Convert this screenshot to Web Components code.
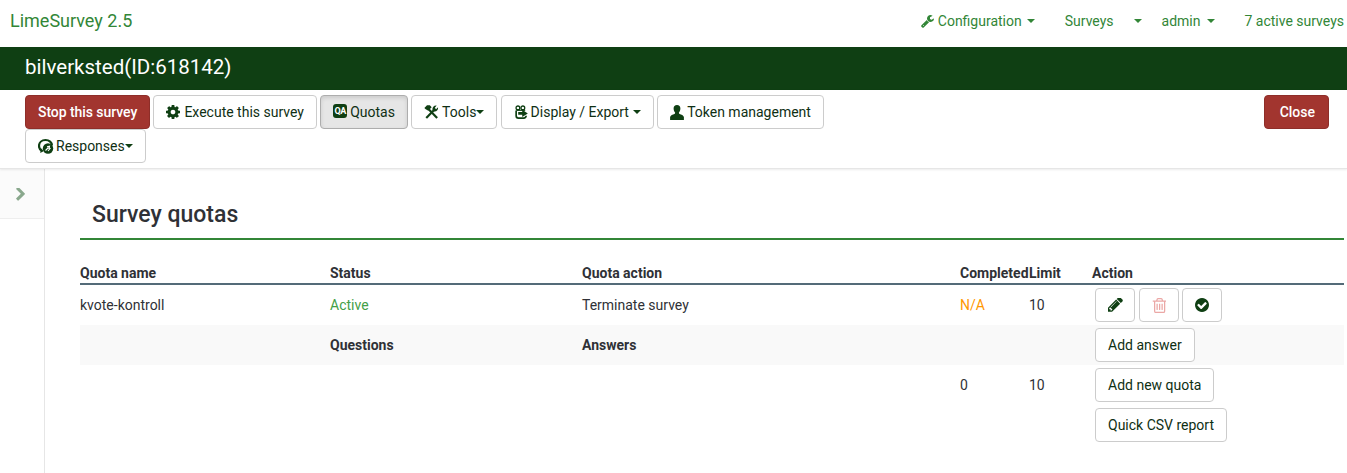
<!DOCTYPE html>
<html>
<head>
<meta charset="utf-8">
<title>Survey quotas</title>
<style>
    html, body {
        margin: 0;
        padding: 0;
        height: 473px;
        overflow: hidden;
        background: #fff;
        font-family: Roboto, "Liberation Sans", sans-serif;
        font-size: 14px;
        color: #2f3136;
    }
    ls-page {
        --green: #328637;
        --dark: #0f3f13;
        --red: #a2352f;
    }
</style>
</head>
<body>
<ls-page>
    <ls-navbar slot="top" brand="LimeSurvey 2.5">
        <nav-link icon="wrench" caret tight gap="30">Configuration</nav-link>
        <nav-link caret wide gap="20">Surveys</nav-link>
        <nav-link caret gap="29">admin</nav-link>
        <nav-link>7 active surveys</nav-link>
    </ls-navbar>
    <title-bar>bilverksted(ID:618142)</title-bar>
    <ls-toolbar>
        <ls-button kind="danger" style="letter-spacing:-.06px">Stop this survey</ls-button>
        <ls-button icon="cog">Execute this survey</ls-button>
        <ls-button icon="qa" active>Quotas</ls-button>
        <ls-button icon="tools" caret="tight">Tools</ls-button>
        <ls-button icon="display" caret="space">Display / Export</ls-button>
        <ls-button icon="user">Token management</ls-button>
        <ls-button icon="responses" caret="tight">Responses</ls-button>
        <ls-button slot="right" kind="danger" style="padding:0 13px 0 15px">Close</ls-button>
    </ls-toolbar>
    <ls-sidebar></ls-sidebar>
    <ls-content heading="Survey quotas">
        <quota-row head>
            <span>Quota name</span><span>Status</span><span>Quota action</span><span>Completed</span><span>Limit</span><span>Action</span>
        </quota-row>
        <quota-row>
            <span>kvote-kontroll</span><span style="color:#43a047">Active</span><span>Terminate survey</span><span style="color:#ff9800">N/A</span><span>10</span>
            <div class="acts">
                <ls-button icon="pencil" square></ls-button>
                <ls-button icon="trash" square faded></ls-button>
                <ls-button icon="check" square></ls-button>
            </div>
        </quota-row>
        <quota-row shaded>
            <span></span><b>Questions</b><b>Answers</b><span></span><span></span>
            <div class="acts"><ls-button>Add answer</ls-button></div>
        </quota-row>
        <quota-row>
            <span></span><span></span><span></span><span>0</span><span>10</span>
            <div class="acts"><ls-button>Add new quota</ls-button></div>
        </quota-row>
        <quota-row>
            <span></span><span></span><span></span><span></span><span></span>
            <div class="acts"><ls-button>Quick CSV report</ls-button></div>
        </quota-row>
    </ls-content>
</ls-page>

<script>
const ICONS = {
    wrench: `<svg viewBox="64 128 1664 1664" width="13" height="13"><path d="M448 1472q0-26-19-45t-45-19-45 19-19 45 19 45 45 19 45-19 19-45zm644-420l-682 682q-37 37-90 37-52 0-91-37l-106-108q-38-36-38-90 0-53 38-91l681-681q39 98 114.5 173.5t173.5 114.5zm634-435q0 39-23 106-47 134-164.5 217.5t-258.5 83.5q-185 0-316.5-131.5t-131.5-316.5 131.5-316.5 316.5-131.5q58 0 121.5 16.5t107.5 46.5q16 11 16 28t-16 28l-293 169v224l193 107q5-3 79-48.5t135.5-81 70.5-35.5q15 0 23.5 10t8.5 25z"/></svg>`,
    cog: `<svg viewBox="128 128 1536 1536" width="14" height="14"><path d="M1152 896q0-106-75-181t-181-75-181 75-75 181 75 181 181 75 181-75 75-181zm512-109v222q0 12-8 23t-20 13l-185 28q-19 54-39 91 35 50 107 138 10 12 10 25t-9 23q-27 37-99 108t-94 71q-12 0-26-9l-138-108q-44 23-91 38-16 136-29 186-7 28-36 28h-222q-14 0-24.5-8.5t-11.5-21.5l-28-184q-49-16-90-37l-141 107q-10 9-25 9-14 0-25-11-126-114-165-168-7-10-7-23 0-12 8-23 15-21 51-66.5t54-70.5q-27-50-41-99l-183-27q-13-2-21-12.5t-8-23.5v-222q0-12 8-23t19-13l186-28q14-46 39-92-40-57-107-138-10-12-10-24 0-10 9-23 26-36 98.5-107.5t94.5-71.5q13 0 26 10l138 107q44-23 91-38 16-136 29-186 7-28 36-28h222q14 0 24.5 8.5t11.5 21.5l28 184q49 16 90 37l142-107q9-9 24-9 13 0 25 10 129 119 165 170 7 8 7 22 0 12-8 23-15 21-51 66.5t-54 70.5q26 50 41 98l183 28q13 2 21 12.5t8 23.5z"/></svg>`,
    qa: `<span class="qa">QA</span>`,
    tools: `<svg viewBox="0 0 16 16" width="15" height="16"><path d="M14 14.500 4.500 4.500" stroke="currentColor" stroke-width="2.300" fill="none"/><path d="M.4 3.600 3.200.8h3L8.200 3 4.500 6.700 2.800 5.600 1.800 5z"/><path d="M2.400 14.500 11 5.500" stroke="currentColor" stroke-width="2.300" fill="none"/><path d="M9 5.500C8.700 2.800 10.800.6 13.500 1L11.600 3.400 12.800 5 15 3C15.400 5.900 13.300 8 10.500 7.500z"/></svg>`,
    display: `<svg viewBox="0 0 15 16" width="14" height="16"><g fill="none" stroke="currentColor"><circle cx="4.200" cy="3.600" r="2" stroke-width="1.400"/><circle cx="9.500" cy="3.600" r="2" stroke-width="1.400"/><path d="M2.300 6.500V12a2.500 2.500 0 0 0 2.500 2.500h5.700A2.500 2.500 0 0 0 13 12" stroke-width="1.800"/><path d="M2.500 6.200H12" stroke-width="1.200"/></g><path d="M4.500 8h4.300V5.600L14.800 9.500 8.800 13.400V11H4.500z"/></svg>`,
    user: `<svg viewBox="1 .6 14 15" width="14" height="15"><path d="M8 .6c2.200 0 3.400 1.500 3.400 3.500 0 1.500-.6 3-1.500 4 0 .7.100 1.200.7 1.500 1.700.8 3.900 1.200 4.300 3v3H1.100v-3c.4-1.800 2.600-2.200 4.300-3 .6-.3.700-.8.700-1.500-.9-1-1.500-2.500-1.500-4C4.600 2.100 5.800.6 8 .6z"/></svg>`,
    responses: `<svg viewBox="0 0 16 16" width="16" height="16"><path d="M3.800 12.800C2 11.700 1 10 1 8 1 4.500 3.800 2 7.500 2S14 4.500 14 7.500" fill="none" stroke="currentColor" stroke-width="2.200"/><path d="M2.200 15 6 13 3 10.500z"/><circle cx="10" cy="10.500" r="5.200"/><path d="M7.500 12.500 10.500 9.500M9 8.800l2.500-.6-.4 2.600M12.500 10 10 13" fill="none" stroke="#fff" stroke-width="1.100"/></svg>`,
    pencil: `<svg viewBox="128 256 1536 1536" width="15" height="15"><path d="M491 1536l91-91-235-235-91 91v107h128v128h107zm523-928q0-22-22-22-10 0-17 7l-542 542q-7 7-7 17 0 22 22 22 10 0 17-7l542-542q7-7 7-17zm-54-192l416 416-832 832h-416v-416zm683 96q0 53-37 90l-166 166-416-416 166-165q36-38 90-38 53 0 91 38l235 234q37 39 37 91z"/></svg>`,
    trash: `<svg viewBox="128 128 1408 1536" width="14" height="15"><path d="M704 736v576q0 14-9 23t-23 9h-64q-14 0-23-9t-9-23v-576q0-14 9-23t23-9h64q14 0 23 9t9 23zm256 0v576q0 14-9 23t-23 9h-64q-14 0-23-9t-9-23v-576q0-14 9-23t23-9h64q14 0 23 9t9 23zm256 0v576q0 14-9 23t-23 9h-64q-14 0-23-9t-9-23v-576q0-14 9-23t23-9h64q14 0 23 9t9 23zm128 724v-948h-896v948q0 22 7 40.500t14.500 27 10.500 8.500h832q3 0 10.500-8.500t14.500-27 7-40.500zm-672-1076h448l-48-117q-7-9-17-11h-317q-10 2-17 11zm928 32v64q0 14-9 23t-23 9h-96v948q0 83-47 143.500t-113 60.500h-832q-66 0-113-58.500t-47-141.500v-952h-96q-14 0-23-9t-9-23v-64q0-14 9-23t23-9h309l70-167q15-37 54-63t79-26h320q40 0 79 26t54 63l70 167h309q14 0 23 9t9 23z"/></svg>`,
    check: `<svg viewBox="128 128 1536 1536" width="14" height="14"><path d="M1412 734q0-28-18-46l-91-90q-19-19-45-19t-45 19l-408 407-226-226q-19-19-45-19t-45 19l-91 90q-18 18-18 46 0 27 18 45l362 362q19 19 45 19 27 0 46-19l543-543q18-18 18-45zm252 162q0 209-103 385.500t-279.500 279.500-385.500 103-385.500-103-279.500-279.500-103-385.500 103-385.500 279.500-279.500 385.500-103 385.500 103 279.500 279.500 103 385.500z"/></svg>`
};

const caretCss = `
    .caret {
        display: inline-block;
        width: 0;
        height: 0;
        border-top: 4px solid currentColor;
        border-left: 4px solid transparent;
        border-right: 4px solid transparent;
        vertical-align: 2px;
    }`;

class LsPage extends HTMLElement {
    constructor() {
        super();
        this.attachShadow({mode: "open"}).innerHTML = `
        <style>
            :host { display: block; }
            .body { display: flex; height: 304px; }
        </style>
        <slot name="top"></slot>
        <slot name="bars"></slot>
        <div class="body">
            <slot name="side"></slot>
            <slot></slot>
        </div>`;
    }
    connectedCallback() {
        for (const el of [...this.children]) {
            const tag = el.tagName.toLowerCase();
            if (tag === "title-bar" || tag === "ls-toolbar") el.slot = "bars";
            if (tag === "ls-sidebar") el.slot = "side";
        }
    }
}

class LsNavbar extends HTMLElement {
    constructor() {
        super();
        this.attachShadow({mode: "open"}).innerHTML = `
        <style>
            :host {
                display: flex;
                height: 47px;
                align-items: center;
                justify-content: space-between;
                padding: 0 3px 5px 10px;
                box-sizing: border-box;
                color: var(--green);
            }
            .brand { font-size: 18px; line-height: 20px; }
            nav { display: flex; align-items: center; }
        </style>
        <span class="brand"></span>
        <nav><slot></slot></nav>`;
    }
    connectedCallback() {
        this.shadowRoot.querySelector(".brand").textContent = this.getAttribute("brand");
    }
}

class NavLink extends HTMLElement {
    constructor() {
        super();
        this.attachShadow({mode: "open"}).innerHTML = `
        <style>
            :host { display: inline-flex; align-items: center; line-height: 20px; color: var(--green); white-space: nowrap; }
            svg { fill: currentColor; display: block; margin-right: 4px; }
            ${caretCss}
            .caret { margin-left: 7px; vertical-align: 0; }
            :host([tight]) .caret { margin-left: 5px; }
            :host([wide]) .caret { margin-left: 20px; }
        </style>
        <span class="ic"></span><slot></slot><span class="c"></span>`;
    }
    connectedCallback() {
        const icon = this.getAttribute("icon");
        if (icon) this.shadowRoot.querySelector(".ic").innerHTML = ICONS[icon];
        if (this.hasAttribute("caret")) this.shadowRoot.querySelector(".c").className = "caret";
        this.style.marginRight = (this.getAttribute("gap") || 0) + "px";
    }
}

class TitleBar extends HTMLElement {
    constructor() {
        super();
        this.attachShadow({mode: "open"}).innerHTML = `
        <style>
            :host {
                display: block;
                height: 43px;
                line-height: 40px;
                padding-left: 25px;
                background: var(--dark);
                color: #fff;
                font-size: 20.5px;
            }
        </style>
        <slot></slot>`;
    }
}

class LsToolbar extends HTMLElement {
    constructor() {
        super();
        this.attachShadow({mode: "open"}).innerHTML = `
        <style>
            :host {
                display: flex;
                justify-content: space-between;
                align-items: flex-start;
                height: 79px;
                box-sizing: border-box;
                padding: 5px 18px 0 25px;
                background: #fff;
                border-bottom: 1px solid #e6e6e6;
                box-shadow: 0 1px 2px rgba(0,0,0,.08);
                position: relative;
            }
            .left { display: flex; flex-wrap: wrap; column-gap: 3.2px; width: 810px; }
        </style>
        <div class="left"><slot></slot></div>
        <slot name="right"></slot>`;
    }
}

class LsButton extends HTMLElement {
    constructor() {
        super();
        this.attachShadow({mode: "open"}).innerHTML = `
        <style>
            :host {
                display: inline-flex;
                align-items: center;
                height: 34px;
                box-sizing: border-box;
                padding: 0 12px;
                border: 1px solid #ccc;
                border-radius: 4px;
                background: #fff;
                color: #0f2f14;
                line-height: 20px;
                white-space: nowrap;
            }
            :host([kind="danger"]) {
                background: var(--red);
                border-color: #8e2e29;
                color: #fff;
                font-weight: 500;
            }
            :host([active]) {
                background: #e6e6e6;
                border-color: #adadad;
                box-shadow: inset 0 2px 4px rgba(0,0,0,.12);
            }
            :host([square]) {
                width: 40px;
                padding: 0;
                justify-content: center;
            }
            .ic { display: inline-flex; color: var(--dark); margin-right: 3px; }
            :host([icon="cog"]) .ic { margin-right: 4px; }
            :host([icon="responses"]) .ic { margin-right: 2px; }
            :host([faded]) .ic { color: #d9534f; opacity: .5; }
            :host([square]) .ic { margin: 0; }
            svg { fill: currentColor; display: block; }
            .qa {
                display: block;
                width: 14px;
                height: 14px;
                margin-top: -2px;
                border-radius: 3px;
                background: var(--dark);
                color: #fff;
                font-size: 9px;
                font-weight: 700;
                line-height: 14px;
                text-align: center;
                letter-spacing: -.5px;
            }
            ${caretCss}
            .caret { border-top-color: var(--dark); }
            .sp { margin-left: 4px; }
        </style>
        <span class="ic"></span><slot></slot><span class="c"></span>`;
    }
    connectedCallback() {
        const icon = this.getAttribute("icon");
        const ic = this.shadowRoot.querySelector(".ic");
        if (icon) ic.innerHTML = ICONS[icon];
        else ic.style.display = "none";
        const caret = this.getAttribute("caret");
        if (caret) this.shadowRoot.querySelector(".c").className = caret === "space" ? "caret sp" : "caret";
    }
}

class LsSidebar extends HTMLElement {
    constructor() {
        super();
        this.attachShadow({mode: "open"}).innerHTML = `
        <style>
            :host {
                display: block;
                width: 45px;
                flex: none;
                box-sizing: border-box;
                border-right: 1px solid #e6e6e6;
            }
            .top {
                height: 50px;
                background: #fbfbfb;
                border-bottom: 1px solid #eee;
                box-sizing: border-box;
                padding: 19px 0 0 16px;
            }
            svg { display: block; fill: #8aa88d; }
        </style>
        <div class="top">
            <svg viewBox="331 154 1051 1484" width="9" height="12.700"><path d="M1363 877l-742 742q-19 19-45 19t-45-19l-166-166q-19-19-19-45t19-45l531-531-531-531q-19-19-19-45t19-45l166-166q19-19 45-19t45 19l742 742q19 19 19 45t-19 45z"/></svg>
        </div>`;
    }
}

class LsContent extends HTMLElement {
    constructor() {
        super();
        this.attachShadow({mode: "open"}).innerHTML = `
        <style>
            :host {
                display: block;
                flex: 1;
                padding: 0 3px 0 35px;
                min-width: 0;
            }
            h3 {
                margin: 0 0 22px;
                height: 71px;
                box-sizing: border-box;
                padding: 31px 0 0 12px;
                border-bottom: 2px solid var(--green);
                font-size: 23px;
                line-height: 30px;
                font-weight: 500;
                color: #2f3136;
            }
        </style>
        <h3></h3>
        <slot></slot>`;
    }
    connectedCallback() {
        this.shadowRoot.querySelector("h3").textContent = this.getAttribute("heading");
    }
}

class QuotaRow extends HTMLElement {
    constructor() {
        super();
        this.attachShadow({mode: "open"}).innerHTML = `
        <style>
            :host {
                display: grid;
                grid-template-columns: 250px 252px 378px 69px 63px 1fr;
                align-items: center;
                height: 40px;
            }
            :host([shaded]) { background: #f9f9f9; }
            :host([head]) {
                height: 18px;
                padding-top: 3px;
                align-items: start;
                font-weight: 700;
                border-bottom: 2px solid #546b78;
                line-height: 17px;
                box-sizing: content-box;
            }
            ::slotted(.acts) { display: flex; gap: 3.5px; padding-left: 3px; }
        </style>
        <slot></slot>`;
    }
}

customElements.define("ls-page", LsPage);
customElements.define("ls-navbar", LsNavbar);
customElements.define("nav-link", NavLink);
customElements.define("title-bar", TitleBar);
customElements.define("ls-toolbar", LsToolbar);
customElements.define("ls-button", LsButton);
customElements.define("ls-sidebar", LsSidebar);
customElements.define("ls-content", LsContent);
customElements.define("quota-row", QuotaRow);
</script>
</body>
</html>
